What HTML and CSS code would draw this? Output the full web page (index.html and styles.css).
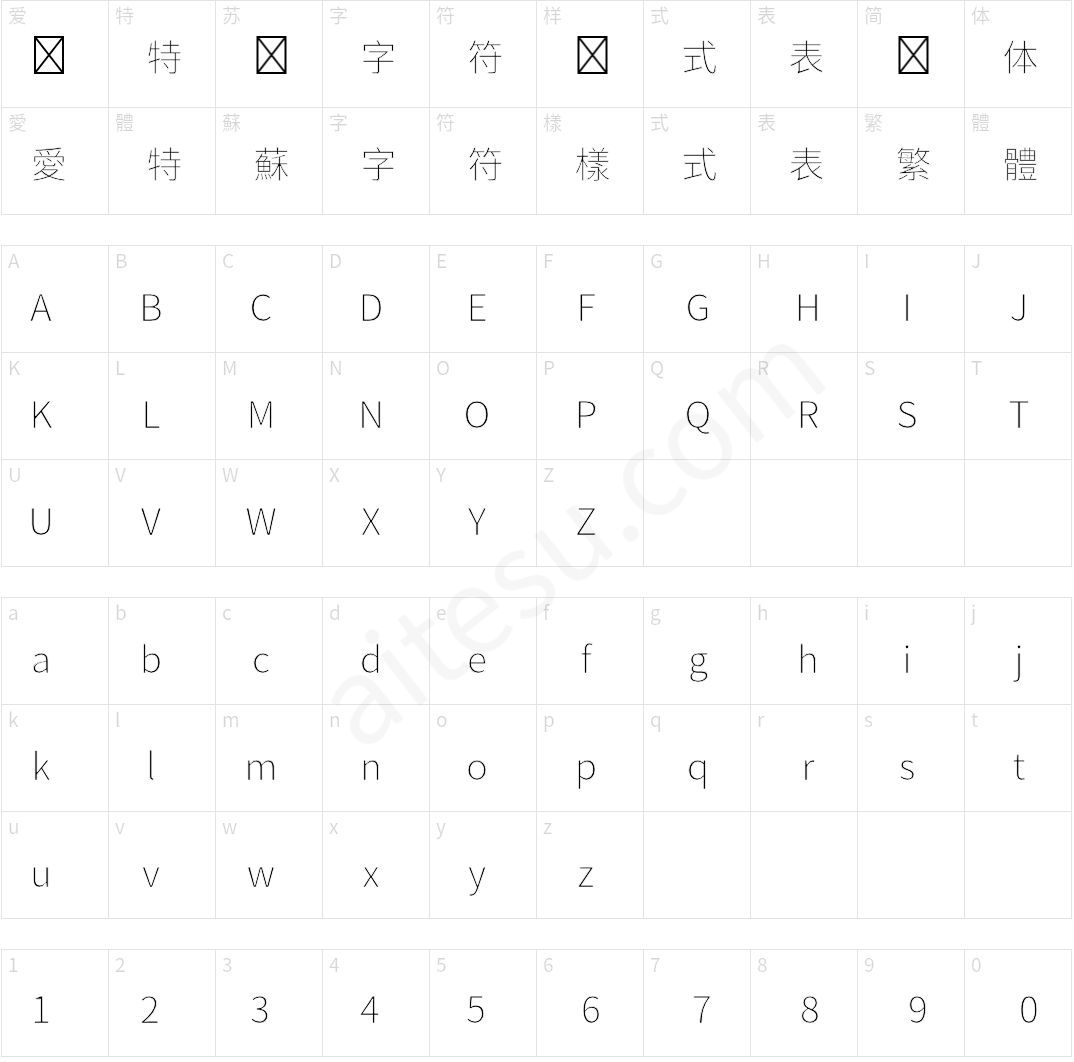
FILE: index.html
```html
<!DOCTYPE html>
<html lang="zh">
<head>
<meta charset="utf-8">
<title>Glyph preview</title>
<link rel="stylesheet" href="styles.css">
</head>
<body>
<div class="sheet cjk">
  <div class="cell"><span class="lbl">爱</span><span class="g"><svg class="tofu" viewBox="0 0 30 38"><rect x="1" y="1" width="28" height="36"/><path d="M1 1 L29 37 M29 1 L1 37"/></svg></span></div>
  <div class="cell"><span class="lbl">特</span><span class="g">特</span></div>
  <div class="cell"><span class="lbl">苏</span><span class="g"><svg class="tofu" viewBox="0 0 30 38"><rect x="1" y="1" width="28" height="36"/><path d="M1 1 L29 37 M29 1 L1 37"/></svg></span></div>
  <div class="cell"><span class="lbl">字</span><span class="g">字</span></div>
  <div class="cell"><span class="lbl">符</span><span class="g">符</span></div>
  <div class="cell"><span class="lbl">样</span><span class="g"><svg class="tofu" viewBox="0 0 30 38"><rect x="1" y="1" width="28" height="36"/><path d="M1 1 L29 37 M29 1 L1 37"/></svg></span></div>
  <div class="cell"><span class="lbl">式</span><span class="g">式</span></div>
  <div class="cell"><span class="lbl">表</span><span class="g">表</span></div>
  <div class="cell"><span class="lbl">简</span><span class="g"><svg class="tofu" viewBox="0 0 30 38"><rect x="1" y="1" width="28" height="36"/><path d="M1 1 L29 37 M29 1 L1 37"/></svg></span></div>
  <div class="cell"><span class="lbl">体</span><span class="g">体</span></div>
  <div class="cell"><span class="lbl">愛</span><span class="g">愛</span></div>
  <div class="cell"><span class="lbl">體</span><span class="g">特</span></div>
  <div class="cell"><span class="lbl">蘇</span><span class="g">蘇</span></div>
  <div class="cell"><span class="lbl">字</span><span class="g">字</span></div>
  <div class="cell"><span class="lbl">符</span><span class="g">符</span></div>
  <div class="cell"><span class="lbl">樣</span><span class="g">樣</span></div>
  <div class="cell"><span class="lbl">式</span><span class="g">式</span></div>
  <div class="cell"><span class="lbl">表</span><span class="g">表</span></div>
  <div class="cell"><span class="lbl">繁</span><span class="g">繁</span></div>
  <div class="cell"><span class="lbl">體</span><span class="g">體</span></div>
</div>

<div class="sheet lat">
  <div class="cell"><span class="lbl">A</span><span class="g">A</span></div>
  <div class="cell"><span class="lbl">B</span><span class="g">B</span></div>
  <div class="cell"><span class="lbl">C</span><span class="g">C</span></div>
  <div class="cell"><span class="lbl">D</span><span class="g">D</span></div>
  <div class="cell"><span class="lbl">E</span><span class="g">E</span></div>
  <div class="cell"><span class="lbl">F</span><span class="g">F</span></div>
  <div class="cell"><span class="lbl">G</span><span class="g">G</span></div>
  <div class="cell"><span class="lbl">H</span><span class="g">H</span></div>
  <div class="cell"><span class="lbl">I</span><span class="g">I</span></div>
  <div class="cell"><span class="lbl">J</span><span class="g">J</span></div>
  <div class="cell"><span class="lbl">K</span><span class="g">K</span></div>
  <div class="cell"><span class="lbl">L</span><span class="g">L</span></div>
  <div class="cell"><span class="lbl">M</span><span class="g">M</span></div>
  <div class="cell"><span class="lbl">N</span><span class="g">N</span></div>
  <div class="cell"><span class="lbl">O</span><span class="g">O</span></div>
  <div class="cell"><span class="lbl">P</span><span class="g">P</span></div>
  <div class="cell"><span class="lbl">Q</span><span class="g">Q</span></div>
  <div class="cell"><span class="lbl">R</span><span class="g">R</span></div>
  <div class="cell"><span class="lbl">S</span><span class="g">S</span></div>
  <div class="cell"><span class="lbl">T</span><span class="g">T</span></div>
  <div class="cell"><span class="lbl">U</span><span class="g">U</span></div>
  <div class="cell"><span class="lbl">V</span><span class="g">V</span></div>
  <div class="cell"><span class="lbl">W</span><span class="g">W</span></div>
  <div class="cell"><span class="lbl">X</span><span class="g">X</span></div>
  <div class="cell"><span class="lbl">Y</span><span class="g">Y</span></div>
  <div class="cell"><span class="lbl">Z</span><span class="g">Z</span></div>
  <div class="cell"></div>
  <div class="cell"></div>
  <div class="cell"></div>
  <div class="cell"></div>
</div>

<div class="sheet lat">
  <div class="cell"><span class="lbl">a</span><span class="g">a</span></div>
  <div class="cell"><span class="lbl">b</span><span class="g">b</span></div>
  <div class="cell"><span class="lbl">c</span><span class="g">c</span></div>
  <div class="cell"><span class="lbl">d</span><span class="g">d</span></div>
  <div class="cell"><span class="lbl">e</span><span class="g">e</span></div>
  <div class="cell"><span class="lbl">f</span><span class="g">f</span></div>
  <div class="cell"><span class="lbl">g</span><span class="g">g</span></div>
  <div class="cell"><span class="lbl">h</span><span class="g">h</span></div>
  <div class="cell"><span class="lbl">i</span><span class="g">i</span></div>
  <div class="cell"><span class="lbl">j</span><span class="g">j</span></div>
  <div class="cell"><span class="lbl">k</span><span class="g">k</span></div>
  <div class="cell"><span class="lbl">l</span><span class="g">l</span></div>
  <div class="cell"><span class="lbl">m</span><span class="g">m</span></div>
  <div class="cell"><span class="lbl">n</span><span class="g">n</span></div>
  <div class="cell"><span class="lbl">o</span><span class="g">o</span></div>
  <div class="cell"><span class="lbl">p</span><span class="g">p</span></div>
  <div class="cell"><span class="lbl">q</span><span class="g">q</span></div>
  <div class="cell"><span class="lbl">r</span><span class="g">r</span></div>
  <div class="cell"><span class="lbl">s</span><span class="g">s</span></div>
  <div class="cell"><span class="lbl">t</span><span class="g">t</span></div>
  <div class="cell"><span class="lbl">u</span><span class="g">u</span></div>
  <div class="cell"><span class="lbl">v</span><span class="g">v</span></div>
  <div class="cell"><span class="lbl">w</span><span class="g">w</span></div>
  <div class="cell"><span class="lbl">x</span><span class="g">x</span></div>
  <div class="cell"><span class="lbl">y</span><span class="g">y</span></div>
  <div class="cell"><span class="lbl">z</span><span class="g">z</span></div>
  <div class="cell"></div>
  <div class="cell"></div>
  <div class="cell"></div>
  <div class="cell"></div>
</div>

<div class="sheet dig">
  <div class="cell"><span class="lbl">1</span><span class="g">1</span></div>
  <div class="cell"><span class="lbl">2</span><span class="g">2</span></div>
  <div class="cell"><span class="lbl">3</span><span class="g">3</span></div>
  <div class="cell"><span class="lbl">4</span><span class="g">4</span></div>
  <div class="cell"><span class="lbl">5</span><span class="g">5</span></div>
  <div class="cell"><span class="lbl">6</span><span class="g">6</span></div>
  <div class="cell"><span class="lbl">7</span><span class="g">7</span></div>
  <div class="cell"><span class="lbl">8</span><span class="g">8</span></div>
  <div class="cell"><span class="lbl">9</span><span class="g">9</span></div>
  <div class="cell"><span class="lbl">0</span><span class="g">0</span></div>
</div>

<div class="wm">aitesu.com</div>
</body>
</html>
```

FILE: styles.css
```css
html, body {
  margin: 0;
  background: #ffffff;
}

body {
  position: relative;
  padding: 0 0 0 1px;
  font-family: "Noto Sans CJK TC", "Noto Sans CJK SC", sans-serif;
  color: #111111;
  overflow: hidden;
  -webkit-font-smoothing: antialiased;
}

.sheet {
  display: grid;
  grid-template-columns: repeat(10, 107px);
  width: max-content;
  border-top: 1px solid #e3e3e3;
  border-left: 1px solid #e3e3e3;
  margin-bottom: 30px;
}

.cell {
  --dx: 0px;
  height: 106px;
  border-right: 1px solid #e3e3e3;
  border-bottom: 1px solid #e3e3e3;
  display: flex;
  flex-direction: column;
}

.lbl {
  font-family: "Noto Sans CJK SC", sans-serif;
  font-size: 19px;
  line-height: 20px;
  padding: 4px 0 0 6px;
  color: #d6d6d6;
  font-weight: 400;
  will-change: transform;
  -webkit-text-stroke: 0.2px #ffffff;
}

.g {
  flex: 1;
  display: flex;
  align-items: center;
  justify-content: center;
  font-size: 37px;
  line-height: 1;
  font-weight: 300;
  padding-bottom: 12px;
  color: #000000;
  -webkit-text-stroke: 0.75px #ffffff;
  will-change: transform;
  transform: translateX(var(--dx));
}

.cjk .g {
  font-size: 36px;
  padding-bottom: 23px;
}

.dig .g {
  padding-bottom: 16px;
}

.tofu {
  width: 30px;
  height: 38px;
  fill: none;
  stroke: #000000;
  stroke-width: 2;
}

/* column offsets of the glyphs inside each cell */
.cjk .cell { --dx: 2.5px; }
.cjk .cell:nth-child(10n+1) { --dx: -6px; }

.lat .cell:nth-child(10n+1) { --dx: -14px; }
.lat .cell:nth-child(10n+2) { --dx: -11px; }
.lat .cell:nth-child(10n+3) { --dx: -8px; }
.lat .cell:nth-child(10n+4) { --dx: -5px; }
.lat .cell:nth-child(10n+5) { --dx: -6px; }
.lat .cell:nth-child(10n+6) { --dx: -4px; }
.lat .cell:nth-child(10n+7) { --dx: 1px; }
.lat .cell:nth-child(10n+8) { --dx: 4px; }
.lat .cell:nth-child(10n+9) { --dx: -4px; }
.lat .cell:nth-child(10n+10) { --dx: 1px; }

.dig .cell:nth-child(1) { --dx: -14px; }
.dig .cell:nth-child(2) { --dx: -12px; }
.dig .cell:nth-child(3) { --dx: -9px; }
.dig .cell:nth-child(4) { --dx: -6px; }
.dig .cell:nth-child(5) { --dx: -7px; }
.dig .cell:nth-child(6) { --dx: 1px; }
.dig .cell:nth-child(7) { --dx: 5px; }
.dig .cell:nth-child(8) { --dx: 6px; }
.dig .cell:nth-child(9) { --dx: 7px; }
.dig .cell:nth-child(10) { --dx: 11px; }

.wm {
  position: absolute;
  left: 565px;
  top: 528px;
  font-family: "Noto Sans CJK SC", sans-serif;
  font-size: 118px;
  font-weight: 400;
  line-height: 1;
  white-space: nowrap;
  color: rgba(0, 0, 0, 0.035);
  transform: translate(-50%, -50%) rotate(-38deg);
  pointer-events: none;
}
```
